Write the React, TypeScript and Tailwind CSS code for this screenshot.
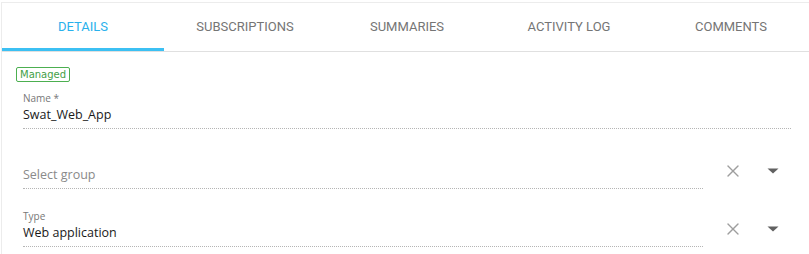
import { X } from 'lucide-react';

const tabs = ['Details', 'Subscriptions', 'Summaries', 'Activity log', 'Comments'];

function Caret() {
  return (
    <svg width="12" height="6" viewBox="0 0 12 6" className="text-[#616161]">
      <path d="M0.5 0.5h11L6 5.5z" fill="currentColor" />
    </svg>
  );
}

function SelectRow({ label, value, placeholder }: { label?: string; value?: string; placeholder?: string }) {
  return (
    <div className="flex items-end">
      <div className="flex-1 border-b border-dotted border-[#b5b5b5] pb-[4px]">
        {label && <div className="text-[10px] leading-[12px] text-[#777]">{label}</div>}
        {value ? (
          <div className="text-[12.5px] leading-[18px] text-[#1a1a1a] mt-[2px]">{value}</div>
        ) : (
          <div className="text-[12.5px] leading-[18px] text-[#8a8a8a]">{placeholder}</div>
        )}
      </div>
      <div className="w-[109px] flex self-stretch pb-[6px] items-end">
        <div className="flex items-center h-[24px] pl-[20px] gap-[24px]">
          <X className="w-[20px] h-[20px] text-[#9e9e9e]" strokeWidth={1.6} />
          <Caret />
        </div>
      </div>
    </div>
  );
}

export default function App() {
  return (
    <div className="w-[809px] h-[254px] bg-white overflow-hidden pt-[2px] font-['Open_Sans',sans-serif]">
      <div className="w-[811px] h-full border-l border-t border-[#ececec] ml-[1px]">
        <div className="grid grid-cols-5 border-b border-[#e0e0e0] font-['Roboto',sans-serif]">
          {tabs.map((t, i) => (
            <div
              key={t}
              className={
                'h-[48px] flex items-center justify-center text-[13px] uppercase ' +
                (i === 0 ? 'text-[#29b1ec] border-b-[3px] border-[#3cc0f3] pt-[3px]' : 'text-[#757575]')
              }
            >
              {t}
            </div>
          ))}
        </div>
        <div className="pl-[14px] pr-[21px] pt-[8px]">
          <span className="inline-block border border-[#4caf50] text-[#43a047] text-[10px] leading-[13px] px-[3px] rounded-[2px] font-['DejaVu_Sans',sans-serif]">
            Managed
          </span>
          <div className="pl-[7px]">
            <div className="mt-[8px] border-b border-dotted border-[#b5b5b5] pb-[4px]">
              <div className="text-[10px] leading-[12px] text-[#777]">Name *</div>
              <div className="text-[12.5px] leading-[18px] text-[#1a1a1a] mt-[2px]">Swat_Web_App</div>
            </div>
            <div className="mt-[30px] -mr-[21px]">
              <SelectRow placeholder="Select group" />
            </div>
            <div className="mt-[21px] -mr-[21px]">
              <SelectRow label="Type" value="Web application" />
            </div>
          </div>
        </div>
      </div>
    </div>
  );
}
